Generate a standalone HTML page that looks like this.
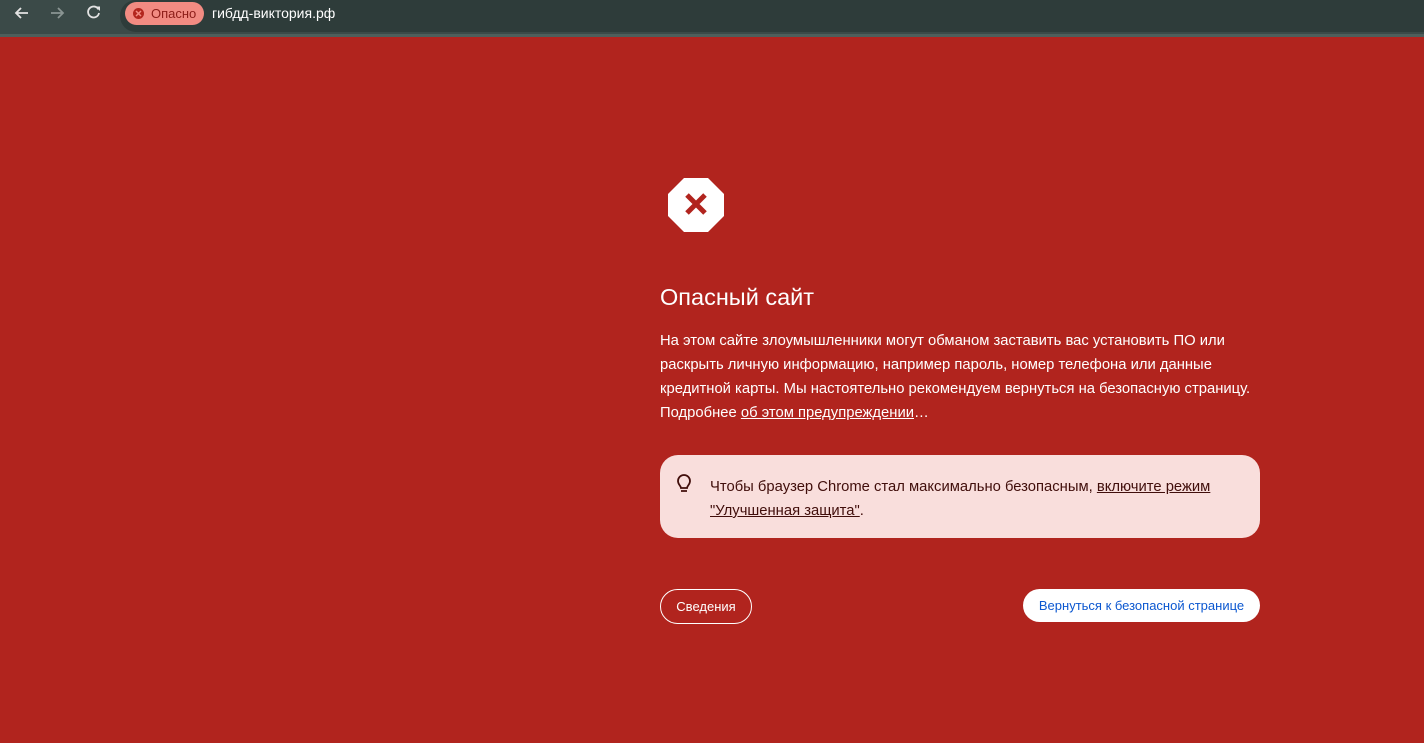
<!DOCTYPE html>
<html><head><meta charset="utf-8"><style>
*{margin:0;padding:0;box-sizing:border-box}
body{width:1424px;height:743px;overflow:hidden;background:#b1241e;font-family:"Liberation Sans","Noto Sans CJK SC",sans-serif;position:relative}
.bar{position:absolute;left:0;top:0;width:1424px;height:34px;background:#3b4a48}
.line{position:absolute;left:0;top:34px;width:1424px;height:3px;background:#4e5e5b}
.omni{position:absolute;left:120px;top:0;width:1304px;height:32px;background:#2e3c3a;border-radius:16px 0 0 16px}
.chip{position:absolute;left:125px;top:2px;width:79px;height:23px;background:#f28b82;border-radius:12px;color:#8c1d18;font-size:13px;line-height:23px;padding-left:26px}
.chip i{position:absolute;left:8px;top:6px;width:11px;height:11px;border-radius:50%;background:#b3261e}
.url{position:absolute;left:212px;top:5px;color:#fff;font-size:14px}
.t{position:absolute;color:#fff}
</style></head><body>
<div class="bar"></div><div class="line"></div><div class="omni"></div>
<svg style="position:absolute;left:12px;top:5px" width="20" height="16" viewBox="0 0 20 16"><path d="M16 8H4M9 3L4 8l5 5" stroke="#e3e3e3" stroke-width="1.8" fill="none"/></svg>
<svg style="position:absolute;left:48px;top:5px" width="20" height="16" viewBox="0 0 20 16"><path d="M3 8h12M10 3l5 5-5 5" stroke="#8a9593" stroke-width="1.8" fill="none"/></svg>
<svg style="position:absolute;left:86px;top:4px" width="16" height="16" viewBox="0 0 16 16"><path d="M12.5 5.5A5.5 5.5 0 1 0 13 9" stroke="#e3e3e3" stroke-width="1.8" fill="none"/><path d="M9.5 2.5h4.5v4.5z" fill="#e3e3e3"/></svg>
<div class="chip"><i></i><svg style="position:absolute;left:10px;top:8px" width="7" height="7"><path d="M1 1l5 5M6 1l-5 5" stroke="#f28b82" stroke-width="1.5"/></svg>Опасно</div>
<div class="url">гибдд-виктория.рф</div>
<svg style="position:absolute;left:668px;top:178px" width="56" height="54" viewBox="0 0 56 54"><polygon points="16,0 40,0 56,16 56,38 40,54 16,54 0,38 0,16" fill="#fff"/><path d="M19 17l18 18M37 17L19 35" stroke="#b1241e" stroke-width="5"/></svg>
<div class="t" style="left:660px;top:284px;font-size:23.5px">Опасный сайт</div>
<div class="t" style="left:660px;top:329px;font-size:14.8px;line-height:24px;width:640px">На этом сайте злоумышленники могут обманом заставить вас установить ПО или<br>раскрыть личную информацию, например пароль, номер телефона или данные<br>кредитной карты. Мы настоятельно рекомендуем вернуться на безопасную страницу.<br>Подробнее <u>об этом предупреждении</u>…</div>
<div style="position:absolute;left:660px;top:455px;width:600px;height:83px;background:#f9dedc;border-radius:18px"></div>
<svg style="position:absolute;left:676px;top:474px" width="16" height="22" viewBox="0 0 16 22"><path d="M5 14c0-2-3-3.5-3-7a6 6 0 0 1 12 0c0 3.5-3 5-3 7z M5 17h6" stroke="#410e0b" stroke-width="1.8" fill="none"/></svg>
<div class="t" style="left:710px;top:475px;font-size:14.8px;line-height:24px;color:#410e0b;width:560px">Чтобы браузер Chrome стал максимально безопасным, <u>включите режим</u><br><u>"Улучшенная защита"</u>.</div>
<div style="position:absolute;left:660px;top:589px;width:92px;height:35px;border:1px solid #fff;border-radius:18px;color:#fff;font-size:13px;line-height:33px;text-align:center">Сведения</div>
<div style="position:absolute;left:1023px;top:589px;width:237px;height:33px;background:#fff;border-radius:17px;color:#0b57d0;font-size:13px;line-height:33px;text-align:center">Вернуться к безопасной странице</div>
</body></html>
